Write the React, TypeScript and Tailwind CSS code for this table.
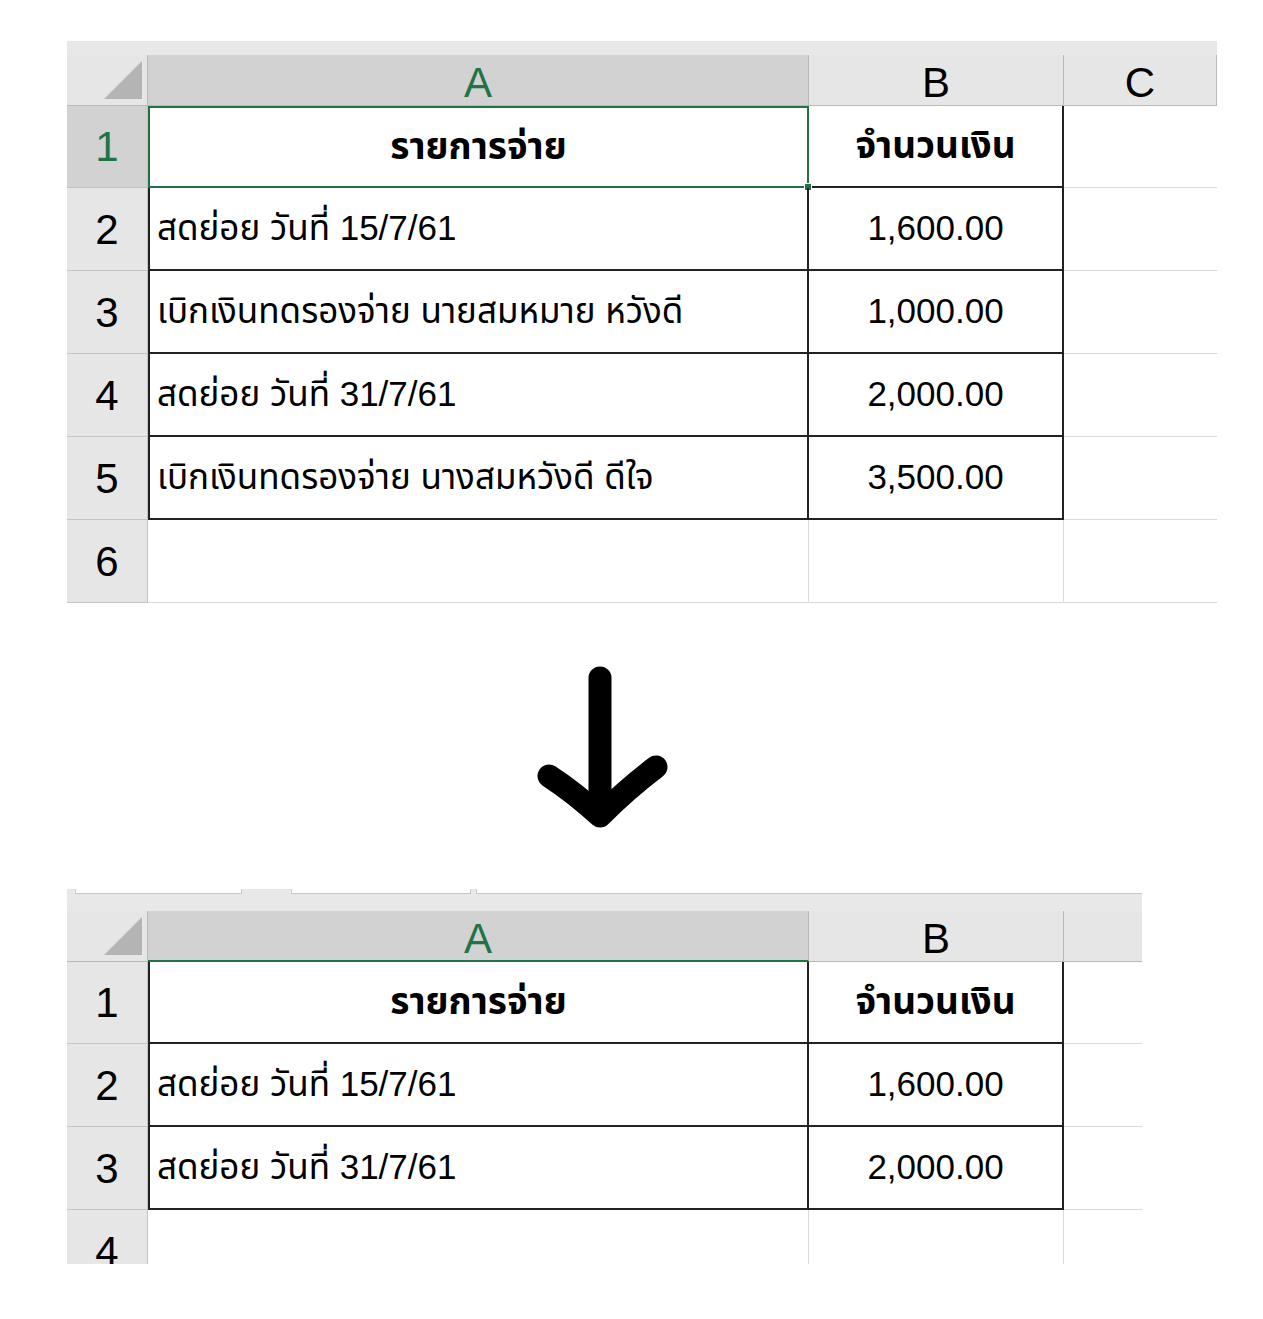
type Row = { n: string; a?: string; b?: string; head?: boolean };

const topRows: Row[] = [
  { n: "1", a: "รายการจ่าย", b: "จำนวนเงิน", head: true },
  { n: "2", a: "สดย่อย วันที่ 15/7/61", b: "1,600.00" },
  { n: "3", a: "เบิกเงินทดรองจ่าย นายสมหมาย หวังดี", b: "1,000.00" },
  { n: "4", a: "สดย่อย วันที่ 31/7/61", b: "2,000.00" },
  { n: "5", a: "เบิกเงินทดรองจ่าย นางสมหวังดี ดีใจ", b: "3,500.00" },
  { n: "6" },
];

const bottomRows: Row[] = [
  { n: "1", a: "รายการจ่าย", b: "จำนวนเงิน", head: true },
  { n: "2", a: "สดย่อย วันที่ 15/7/61", b: "1,600.00" },
  { n: "3", a: "สดย่อย วันที่ 31/7/61", b: "2,000.00" },
  { n: "4" },
];

const Corner = () => (
  <div className="relative h-[51px] bg-[#e6e6e6] border-r border-b border-[#b9b9b9]">
    <div className="absolute right-[5px] bottom-[6px] size-[38px] bg-[#b4b4b4] [clip-path:polygon(100%_0,100%_100%,0_100%)]" />
  </div>
);

const ColHead = ({ label, active, greenBottom }: { label: string; active?: boolean; greenBottom?: boolean }) => (
  <div
    className={`h-[51px] flex items-center justify-center pt-[6px] border-r border-[#b9b9b9] text-[42px] leading-none ${
      active ? "bg-[#d2d2d2] text-[#217346]" : "bg-[#e6e6e6] text-black"
    } ${greenBottom ? "border-b-2 border-b-[#217346]" : "border-b border-b-[#b9b9b9]"}`}
  >
    {label}
  </div>
);

const SheetRow = ({ row, selected, extra }: { row: Row; selected?: boolean; extra: number }) => {
  const h = row.n === "1" ? "h-[82px]" : "h-[83px]";
  const table = row.a !== undefined;
  return (
    <>
      <div
        className={`${h} flex items-center justify-center border-r border-b border-[#c4c4c4] text-[42px] ${
          selected ? "bg-[#d2d2d2] text-[#217346]" : "bg-[#e6e6e6] text-black"
        }`}
      >
        {row.n}
      </div>
      {table ? (
        <div
          className={`${h} relative flex items-center ${
            row.head ? "justify-center font-bold text-[37px]" : "pl-[7px] text-[35px]"
          } ${selected ? "border-2 border-[#217346]" : "border-l-2 border-r-2 border-b-2 border-[#222]"}`}
        >
          {row.a}
          {selected && <div className="absolute -right-[5px] -bottom-[5px] size-[8px] bg-[#217346] border border-white" />}
        </div>
      ) : (
        <div className={`${h} border-r border-b border-[#d9d9d9]`} />
      )}
      {table ? (
        <div
          className={`${h} flex items-center justify-center border-r-2 border-b-2 border-[#222] ${
            row.head ? "font-bold text-[37px]" : "text-[35px]"
          }`}
        >
          {row.b}
        </div>
      ) : (
        <div className={`${h} border-r border-b border-[#d9d9d9]`} />
      )}
      {extra > 0 && <div className={`${h} border-b border-[#d9d9d9]`} />}
    </>
  );
};

const Arrow = () => (
  <svg width="146" height="180" viewBox="0 0 146 180" className="ml-[527px] mt-[56px]">
    <g fill="none" stroke="#000" strokeWidth="23" strokeLinecap="round" strokeLinejoin="round">
      <path d="M73 19 L73 152" />
      <path d="M22 117 Q48 134 73 157 Q100 130 129 108" />
    </g>
  </svg>
);

export default function App() {
  return (
    <div className="w-[1263px] h-[1319px] bg-white font-[Tahoma,'Liberation_Sans','Noto_Sans_Thai','DejaVu_Sans',sans-serif] text-black overflow-hidden">
      {/* top sheet */}
      <div className="ml-[67px] pt-[41px] w-[1150px]">
        <div className="h-[14px] bg-[#e8e8e8]" />
        <div className="grid grid-cols-[81px_661px_255px_153px]">
          <Corner />
          <ColHead label="A" active />
          <ColHead label="B" />
          <ColHead label="C" />
          {topRows.map((r, i) => (
            <SheetRow key={r.n} row={r} selected={i === 0} extra={153} />
          ))}
        </div>
      </div>

      <Arrow />

      {/* bottom sheet, cut off at row 4 like the screenshot */}
      <div className="ml-[67px] mt-[50px] w-[1075px] h-[375px] overflow-hidden">
        <div className="h-[22px] bg-[#e8e8e8] flex items-start">
          <div className="ml-[8px] w-[167px] h-[5px] bg-white border-x border-b border-[#c8c8c8]" />
          <div className="ml-[49px] w-[180px] h-[5px] bg-white border-x border-b border-[#c8c8c8]" />
          <div className="ml-[5px] flex-1 h-[5px] bg-white border-l border-b border-[#c8c8c8]" />
        </div>
        <div className="grid grid-cols-[81px_661px_255px_78px]">
          <Corner />
          <ColHead label="A" active greenBottom />
          <ColHead label="B" />
          <div className="h-[51px] bg-[#e6e6e6] border-b border-[#b9b9b9]" />
          {bottomRows.map((r) => (
            <SheetRow key={r.n} row={r} extra={78} />
          ))}
        </div>
      </div>
    </div>
  );
}
